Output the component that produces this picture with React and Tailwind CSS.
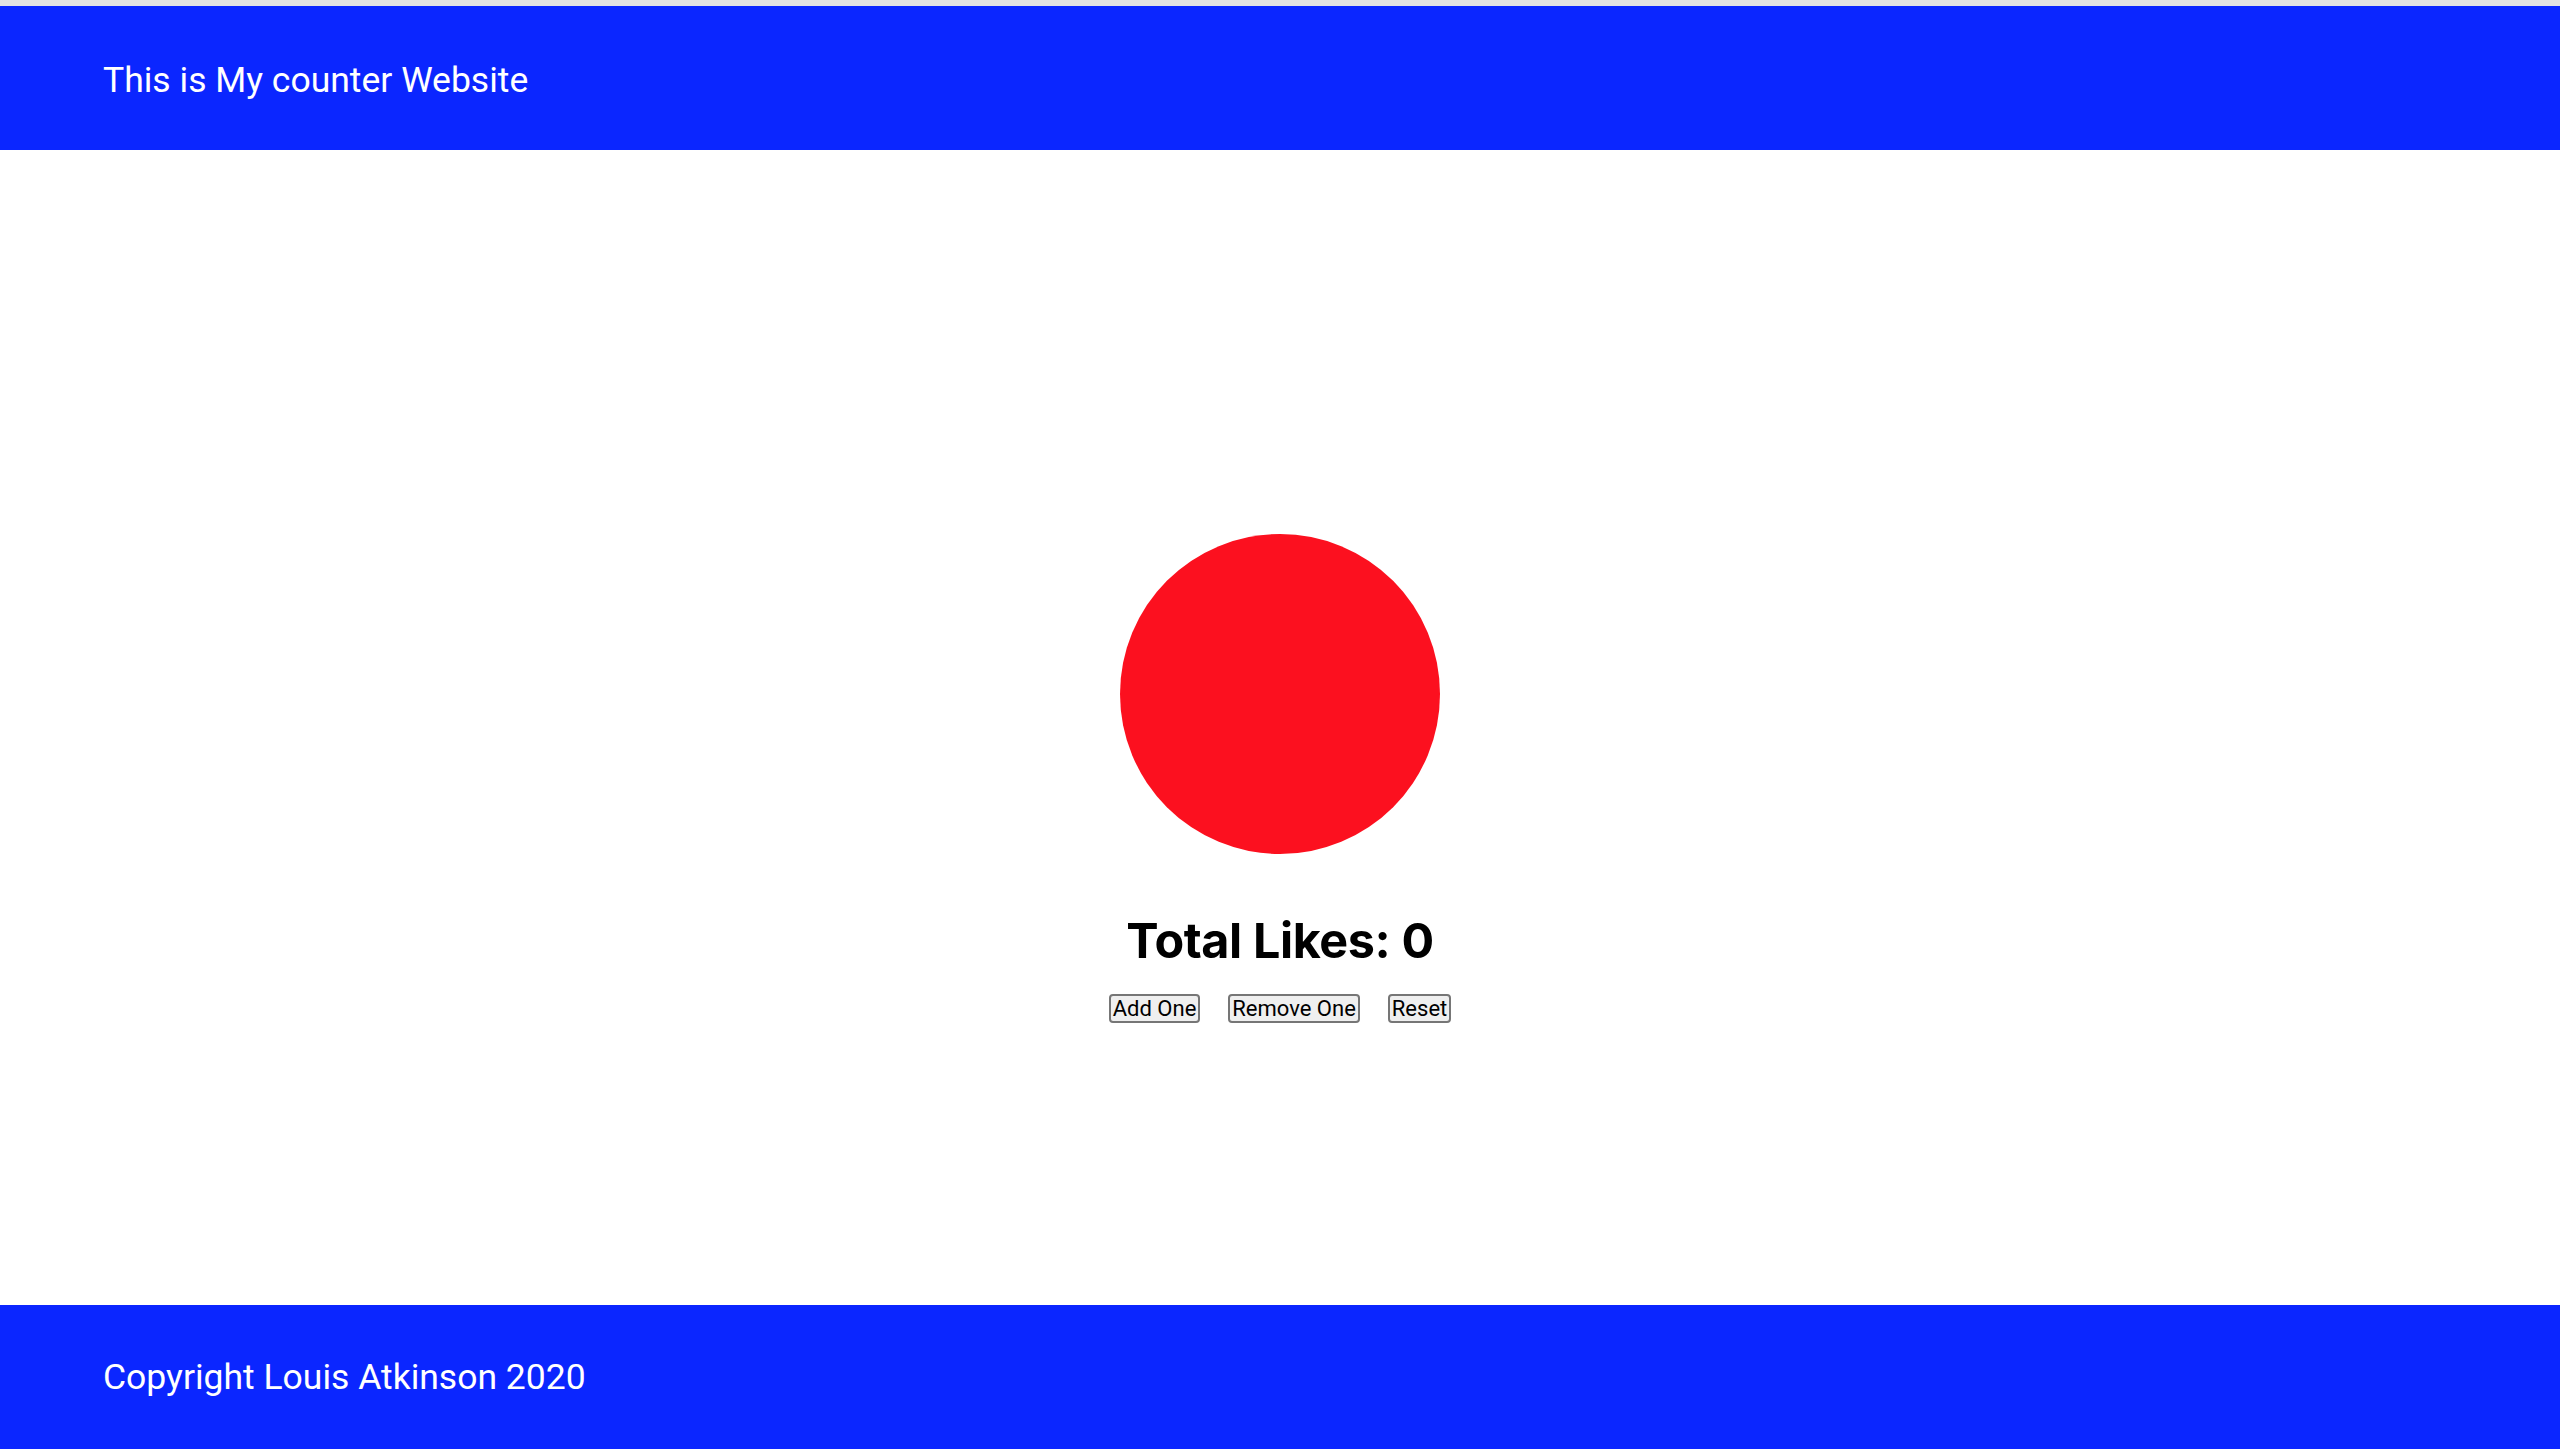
import { useState } from "react";

export default function App() {
  const [likes, setLikes] = useState(0);

  return (
    <div className="flex min-h-screen flex-col bg-white pt-[6px] font-['Roboto',sans-serif]" style={{ boxShadow: "inset 0 6px 0 #e3e3e3" }}>
      <header className="flex h-[144px] items-center bg-[#0b26ff] pt-[5px] pl-[103px] text-[35.5px] text-white">
        This is My counter Website
      </header>

      <main className="flex flex-1 flex-col items-center pt-[384px]">
        <div className="h-[320px] w-[320px] rounded-full bg-[#fc101f]" />
        <h1 className="mt-[57px] font-['Inter',sans-serif] text-[48.5px] leading-[60px] font-bold tracking-[-0.4px] text-black">
          Total Likes: {likes}
        </h1>
        <div className="mt-[23px] flex gap-[28px]">
          <button
            className="h-[29px] rounded-[4px] border-2 border-[#767676] bg-[#efefef] px-[2px] text-[22px] leading-none text-black"
            onClick={() => setLikes(likes + 1)}
          >
            Add One
          </button>
          <button
            className="h-[29px] rounded-[4px] border-2 border-[#767676] bg-[#efefef] px-[2px] text-[22px] leading-none text-black"
            onClick={() => setLikes(likes - 1)}
          >
            Remove One
          </button>
          <button
            className="h-[29px] rounded-[4px] border-2 border-[#767676] bg-[#efefef] px-[2px] text-[22px] leading-none text-black"
            onClick={() => setLikes(0)}
          >
            Reset
          </button>
        </div>
      </main>

      <footer className="flex h-[144px] items-center bg-[#0b26ff] pt-[2px] pl-[103px] text-[35.5px] text-white">
        Copyright Louis Atkinson 2020
      </footer>
    </div>
  );
}
